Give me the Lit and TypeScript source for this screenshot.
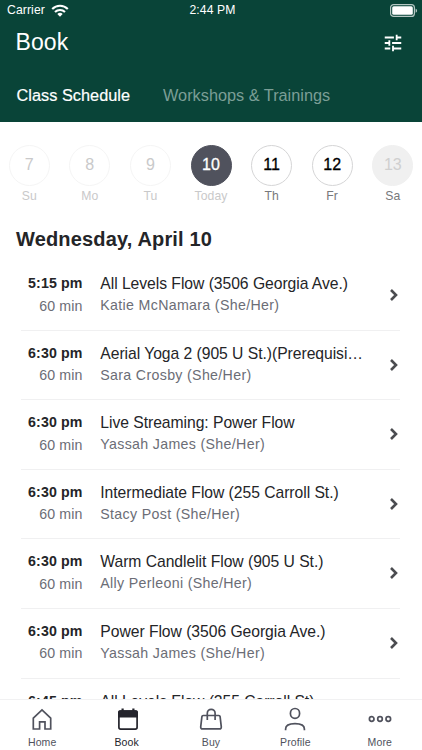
import { LitElement, html, css, svg, nothing } from "lit";
import { customElement } from "lit/decorators.js";
import { classMap } from "lit/directives/class-map.js";

interface Day { num: number; label: string; state: "past" | "today" | "open" | "closed" }
interface Session { time: string; name: string; teacher?: string }

const days: Day[] = [
  { num: 7, label: "Su", state: "past" },
  { num: 8, label: "Mo", state: "past" },
  { num: 9, label: "Tu", state: "past" },
  { num: 10, label: "Today", state: "today" },
  { num: 11, label: "Th", state: "open" },
  { num: 12, label: "Fr", state: "open" },
  { num: 13, label: "Sa", state: "closed" },
];

const sessions: Session[] = [
  { time: "5:15 pm", name: "All Levels Flow (3506 Georgia Ave.)", teacher: "Katie McNamara (She/Her)" },
  { time: "6:30 pm", name: "Aerial Yoga 2 (905 U St.)(Prerequisi…", teacher: "Sara Crosby (She/Her)" },
  { time: "6:30 pm", name: "Live Streaming: Power Flow", teacher: "Yassah James (She/Her)" },
  { time: "6:30 pm", name: "Intermediate Flow (255 Carroll St.)", teacher: "Stacy Post (She/Her)" },
  { time: "6:30 pm", name: "Warm Candlelit Flow (905 U St.)", teacher: "Ally Perleoni (She/Her)" },
  { time: "6:30 pm", name: "Power Flow (3506 Georgia Ave.)", teacher: "Yassah James (She/Her)" },
  { time: "6:45 pm", name: "All Levels Flow (255 Carroll St)" },
];

const tabs = [
  { label: "Home", icon: svg`<path d="M4.300 11.200 13 2.900l8.700 8.300V22h-5.700v-7.200h-5.400V22H4.300z"/>` },
  { label: "Book", icon: svg`<rect x="4.900" y="4.200" width="18.200" height="17.900" rx="1.800"/><path class="solid" d="M4 10.500V5.200a2 2 0 0 1 2-2h1.500V1.500h2.200v1.700h8.600V1.500h2.200v1.700H22a2 2 0 0 1 2 2v5.300z"/>` },
  { label: "Buy", icon: svg`<path d="M5.200 8.500h15.600c.8 0 1.200.5 1.300 1.200l1.200 10.200c.1 1.200-.6 2-1.700 2H4.400c-1.100 0-1.800-.8-1.700-2L3.900 9.700c.1-.7.500-1.200 1.300-1.200z"/><path d="M9.300 13V6.200a3.900 3.900 0 0 1 7.800 0V13"/>` },
  { label: "Profile", icon: svg`<ellipse cx="13" cy="6.400" rx="4.600" ry="4.900"/><path d="M3.600 23.200v-1.200c0-3 2.500-5.400 9.400-5.400s9.400 2.400 9.400 5.400v1.200"/>` },
  { label: "More", icon: svg`<circle cx="4.700" cy="12" r="2.300"/><circle cx="13" cy="12" r="2.300"/><circle cx="21.300" cy="12" r="2.300"/>` },
];

@customElement("app-root")
export class AppRoot extends LitElement {
  static styles = css`
    :host {
      display: flex; flex-direction: column; width: 422px; height: 750px; overflow: hidden;
      background: #fff; color: #242528; font-family: "Liberation Sans", Arial, sans-serif;
      white-space: nowrap;
    }
    * { box-sizing: border-box; }
    svg { display: block; flex: none; }
    header { flex: none; height: 122px; background: #094438; color: #fff; }
    .status {
      display: grid; grid-template-columns: 1fr auto 1fr; align-items: center; height: 20px;
      padding: 0 4px 0 7px; font-size: 12.200px; line-height: 19px;
    }
    .carrier { display: flex; align-items: center; gap: 6px; letter-spacing: .1px; }
    .clock { letter-spacing: .1px; transform: translateY(-.5px); }
    .battery { justify-self: end; }
    .bar { display: flex; justify-content: space-between; align-items: center; height: 45px; padding: 0 18px 0 15.500px; }
    h1 { margin: 0; font-size: 23px; font-weight: 400; letter-spacing: .1px; line-height: 28px; padding-bottom: 1px; }
    .sections { display: flex; gap: 33px; padding: 19px 16.500px 0; font-size: 16.300px; line-height: 22px; }
    .sections .current { -webkit-text-stroke: .2px #fff; letter-spacing: .03px; }
    .sections .other { color: #7b9e96; }
    .days {
      flex: none; display: grid; grid-template-columns: repeat(7, 60.600px); justify-content: center;
      height: 105px; padding-top: 22.500px;
    }
    .day { display: flex; flex-direction: column; align-items: center; gap: 2.500px; color: #c9c9ca; }
    .num {
      width: 41px; height: 41px; border: 1px solid #f5f5f5; border-radius: 50%;
      display: flex; align-items: center; justify-content: center; font-size: 16px;
    }
    .wd { font-size: 12.200px; line-height: 16px; letter-spacing: .1px; }
    .today .num { background: #50525d; border-color: #50525d; color: #fff; -webkit-text-stroke: .3px #fff; }
    .open .num { border-color: #d5d5d6; color: #000; -webkit-text-stroke: .3px #000; }
    .open .wd, .closed .wd { color: #77787b; }
    .closed .num { background: #f0f0f0; border-color: #f0f0f0; color: #cfcfcf; }
    h2 {
      flex: none; margin: -1px 0 0; height: 35px; padding-left: 16px;
      font-size: 20px; line-height: 26px; letter-spacing: .16px;
    }
    .list { flex: 1; min-height: 0; overflow: hidden; padding: 0 22px 0 21px; }
    .row {
      display: grid; grid-template-columns: 61.500px 268px 1fr; column-gap: 17.800px; align-items: start;
      height: 69.600px; padding-top: 12px; border-bottom: 1px solid #f0f0f1;
    }
    .when { text-align: right; }
    .time { font-size: 14.200px; font-weight: 700; line-height: 21px; letter-spacing: .12px; }
    .length { margin-top: 2.500px; font-size: 14.200px; line-height: 19px; color: #6b6d76; letter-spacing: .1px; }
    .name { font-size: 15.700px; line-height: 21px; letter-spacing: -.04px; }
    .teacher { margin-top: 2px; font-size: 14.200px; line-height: 19px; color: #6b6d76; letter-spacing: .33px; }
    .chev { justify-self: end; margin: 15px 1px 0 0; }
    nav {
      flex: none; height: 51px; display: grid; grid-template-columns: repeat(5, 1fr);
      border-top: 1px solid #f1f1f2; color: #50525d;
    }
    .tab { display: flex; flex-direction: column; align-items: center; padding-top: 7px; font-size: 10.500px; line-height: 14px; gap: 2px; letter-spacing: .12px; }
    .tab svg { fill: none; stroke: currentColor; stroke-width: 1.700; }
    .tab.active { color: #24242c; }
    .tab .solid { fill: currentColor; stroke: none; }
  `;

  render() {
    return html`
      <header>
        <div class="status">
          <div class="carrier">
            <span>Carrier</span>
            <svg width="18" height="13" viewBox="0 0 18 13" fill="none" stroke="#fff" stroke-width="2.100">
              <path d="M1.200 5a11 11 0 0 1 15.600 0M4 8a7.100 7.100 0 0 1 10 0"/>
              <path d="M9 12.800 6.300 10.100a3.800 3.800 0 0 1 5.400 0z" fill="#fff" stroke="none"/>
            </svg>
          </div>
          <span class="clock">2:44 PM</span>
          <svg class="battery" width="28" height="13" viewBox="0 0 28 13">
            <rect x=".6" y=".6" width="23.800" height="11.800" rx="3" fill="none" stroke="#b5c7c3" stroke-width="1.200"/>
            <rect x="2.200" y="2.200" width="20.600" height="8.600" rx="1.500" fill="#fff"/>
            <path d="M25.600 4.400c2 .8 2 3.500 0 4.300z" fill="#b5c7c3"/>
          </svg>
        </div>
        <div class="bar">
          <h1>Book</h1>
          <svg width="22" height="22" viewBox="0 0 24 24" fill="#fff">
            <path d="M3 17v2h6v-2H3zM3 5v2h10V5H3zm10 16v-2h8v-2h-8v-2h-2v6h2zM7 9v2H3v2h4v2h2V9H7zm14 4v-2H11v2h10zm-6-4h2V7h4V5h-4V3h-2v6z"/>
          </svg>
        </div>
        <div class="sections"><span class="current">Class Schedule</span><span class="other">Workshops &amp; Trainings</span></div>
      </header>
      <div class="days">
        ${days.map((d) => html`<div class=${classMap({ day: true, [d.state]: true })}>
          <div class="num">${d.num}</div><div class="wd">${d.label}</div>
        </div>`)}
      </div>
      <h2>Wednesday, April 10</h2>
      <div class="list">
        ${sessions.map((s) => html`<div class="row">
          <div class="when">
            <div class="time">${s.time}</div>
            ${s.teacher ? html`<div class="length">60 min</div>` : nothing}
          </div>
          <div>
            <div class="name">${s.name}</div>
            ${s.teacher ? html`<div class="teacher">${s.teacher}</div>` : nothing}
          </div>
          <svg class="chev" width="10" height="14" viewBox="0 0 10 14" fill="none" stroke="#4b4c50" stroke-width="2.600">
            <path d="m2 2 5 5-5 5"/>
          </svg>
        </div>`)}
      </div>
      <nav>
        ${tabs.map((t) => html`<div class=${classMap({ tab: true, active: t.label === "Book" })}>
          <svg width="26" height="26" viewBox="0 0 26 26">${t.icon}</svg><span>${t.label}</span>
        </div>`)}
      </nav>`;
  }
}
